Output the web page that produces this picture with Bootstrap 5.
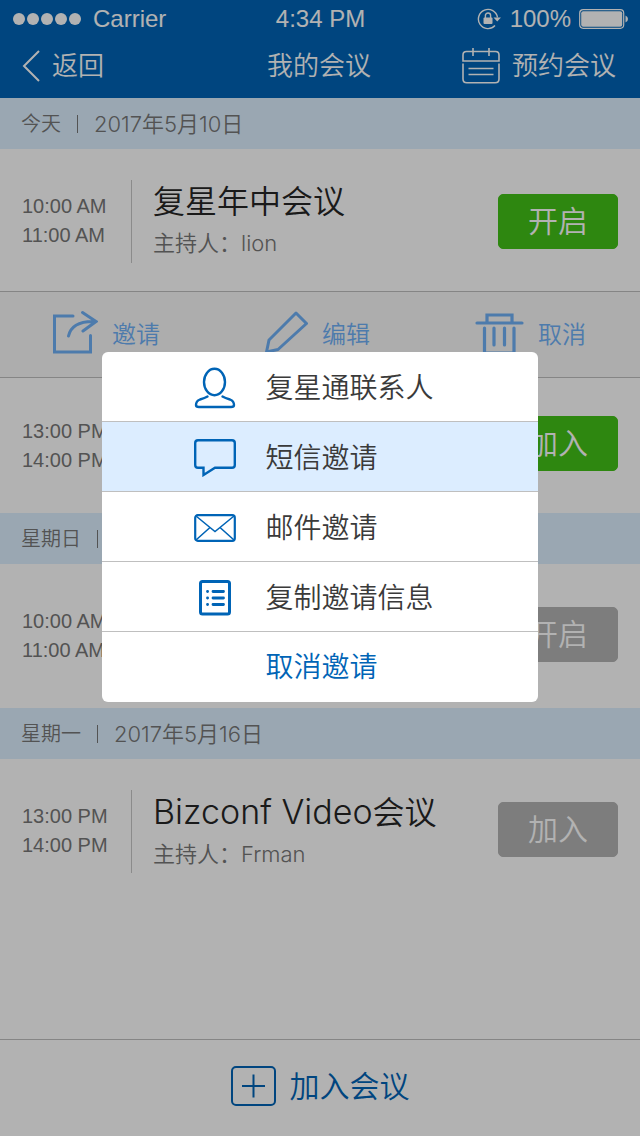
<!DOCTYPE html>
<html lang="zh-CN">
<head>
<meta charset="utf-8">
<meta name="viewport" content="width=device-width, initial-scale=1">
<title>我的会议</title>
<link rel="stylesheet" href="https://cdn.jsdelivr.net/npm/bootstrap@5.3.0/dist/css/bootstrap.min.css">
<script src="https://cdn.jsdelivr.net/npm/bootstrap@5.3.0/dist/js/bootstrap.bundle.min.js"></script>
<style>
  :root { --brand: #0064b6; --grey: #777; --thin: 350; }
  body { font-family: Inter, "Noto Sans CJK SC", sans-serif; font-weight: var(--thin); color: #262626; background: #fff; }
  button { font-weight: inherit; }
  svg { display: block; flex: none; fill: none; stroke: currentColor; }
  .top { background: var(--brand); color: #fff; height: 98px; }
  .status { font: 400 24px/36px "Liberation Sans", sans-serif; padding: 0 12px 0 13px; height: 38px; }
  .side { flex: 1 1 0; }
  .bar { height: 56px; padding: 0 24px 0 22px; font-size: 26px; line-height: 38px; }
  .bar h1 { font-size: 26px; line-height: 38px; font-weight: var(--thin); margin: 0; }
  .bar button { gap: 12px; }
  .plain { border: 0; background: none; padding: 0; color: inherit; }
  .day { background: #ddf0ff; color: var(--grey); height: 51px; padding: 0 22px 0 21px; gap: 16px; font-size: 20px; line-height: 30px; }
  .day time { font-size: 22px; }
  .rule { width: 1px; height: 18px; background: currentColor; }
  .meeting { min-height: 144px; padding: 0 22px; }
  .meeting.first { min-height: 143px; padding-top: 2px; }
  .meeting.short { min-height: 135px; }
  .line-b { border-bottom: 1px solid #bfbfbf; }
  .times { width: 109px; font-family: "Liberation Sans", sans-serif; font-size: 20px; line-height: 29px; color: var(--grey); }
  .info { border-left: 1px solid #c8c8c8; height: 83px; padding-left: 21px; }
  .info h2 { font-size: 32px; line-height: 44px; font-weight: var(--thin); margin: 0; }
  .info h2 span { font-size: 34px; }
  .info p { font-size: 22px; line-height: 38px; color: var(--grey); margin: 0; }
  .go { width: 120px; height: 55px; border-radius: 5px; font-size: 30px; font-weight: var(--thin); padding: 0; margin-bottom: 4px; --bs-btn-color: #fff; --bs-btn-bg: #42c217; --bs-btn-border-color: #42c217; }
  .go:disabled { opacity: 1; color: #fff; background: #b3b3b3; border-color: #b3b3b3; }
  .first .go { margin-bottom: 0; }
  .tools { background: #f8f8f8; height: 86px; padding: 0 54px 0 52px; color: #6fb0f6; font-size: 24px; }
  .tools button { gap: 14px; }
  .tools svg { margin-bottom: 5px; }
  .join { border-top: 1px solid #bfbfbf; height: 97px; padding-bottom: 4px; font-size: 30px; color: var(--brand); }
  .join button { gap: 14px; }
  .veil { position: fixed; inset: 0; background: rgba(0, 0, 0, .3); padding-top: 352px; }
  .sheet { width: 68%; border-radius: 6px; overflow: hidden; background: #fff; }
  .sheet button { display: grid; grid-template-columns: 40px 1fr; column-gap: 30px; align-items: center; justify-items: center; width: 100%; height: 70px; padding: 3px 0 0 93px; font-size: 28px; color: #3a3a3a; }
  .sheet button span { justify-self: start; grid-column: 2; }
  .sheet svg { color: var(--brand); }
  .sheet .chosen { background: #dcedff; }
  .sheet .cancel { color: var(--brand); padding-top: 0; }
</style>
</head>
<body class="d-flex flex-column min-vh-100">
<header class="top">
  <div class="status d-flex align-items-center">
    <div class="side d-flex align-items-center" style="gap:11px">
      <svg width="69" height="14"><g fill="#fff" stroke="none"><circle cx="6" cy="7" r="6"/><circle cx="20" cy="7" r="6"/><circle cx="34" cy="7" r="6"/><circle cx="48" cy="7" r="6"/><circle cx="62" cy="7" r="6"/></g></svg>
      <span>Carrier</span>
    </div>
    <span>4:34 PM</span>
    <div class="side d-flex align-items-center justify-content-end gap-2">
      <svg width="25" height="22" viewBox="0 0 25 22"><path d="M20.500 9.500A9.600 9.600 0 1 0 18 17.600" stroke-width="1.400"/><path d="M16.500 9.500h7.500l-3.800 4z" fill="currentColor" stroke="none"/><rect x="6.500" y="9.500" width="9" height="6.500" rx="1" fill="currentColor" stroke="none"/><path d="M8.400 10V7.600a2.600 2.600 0 0 1 5.200 0V10" stroke-width="1.400"/></svg>
      <span>100%</span>
      <svg width="49" height="20" viewBox="0 0 49 20"><rect x=".7" y=".7" width="44" height="18.600" rx="3.500" stroke-width="1.200"/><rect x="2.200" y="2.200" width="41" height="15.600" rx="2" fill="currentColor" stroke="none"/><path d="M46.500 6.500q2.500 1 2.500 3.500t-2.500 3.500z" fill="currentColor" stroke="none"/></svg>
    </div>
  </div>
  <nav class="bar d-flex align-items-center">
    <div class="side"><button class="plain d-flex align-items-center">
      <svg width="18" height="32" viewBox="0 0 18 32" stroke-width="2"><path d="M17 1 2 16l15 15"/></svg>返回</button></div>
    <h1>我的会议</h1>
    <div class="side d-flex justify-content-end"><button class="plain d-flex align-items-center text-nowrap">
      <svg width="38" height="36" viewBox="0 0 38 36" stroke-width="1.600"><path d="M1 13V7q0-3.500 3.500-3.500h29Q37 3.500 37 7v6z"/><path d="M11 0v8M27 0v8M1 15.500V31q0 3.800 3.800 3.800h28.400Q37 34.800 37 31V15.500M6.500 20.500h25M6.500 26.500h25"/></svg>预约会议</button></div>
  </nav>
</header>

<main class="flex-grow-1">
  <div class="day d-flex align-items-center"><span>今天</span><i class="rule"></i><time datetime="2017-05-10">2017年5月10日</time></div>
  <article class="meeting first d-flex align-items-center line-b">
    <div class="times">10:00 AM<br>11:00 AM</div>
    <div class="info flex-grow-1"><h2>复星年中会议</h2><p>主持人：lion</p></div>
    <button class="btn go">开启</button>
  </article>
  <div class="tools d-flex align-items-center justify-content-between line-b">
    <button class="plain d-flex align-items-center">
      <svg width="46" height="44" viewBox="0 0 46 44" stroke-width="3" stroke-linecap="round"><path d="M21 6H2.500v36h36V25.500"/><path d="M16.500 26C19 15 29 11 43 11.500M30.500 2.500 44 11.500 31 21"/></svg>邀请</button>
    <button class="plain d-flex align-items-center">
      <svg width="43" height="44" viewBox="0 0 43 44" stroke-width="3" stroke-linejoin="round"><path d="M31 3 41.500 13.500 13 39.500 1.500 42 4 30z"/></svg>编辑</button>
    <button class="plain d-flex align-items-center">
      <svg width="49" height="44" viewBox="0 0 49 44" stroke-width="3.200" stroke-linecap="round"><path d="M2 13h45M12 12V5h25v7M9.500 18v25h29.500V18M19 18v17M29.500 18v17"/></svg>取消</button>
  </div>
  <article class="meeting short d-flex align-items-center">
    <div class="times flex-grow-1">13:00 PM<br>14:00 PM</div>
    <button class="btn go">加入</button>
  </article>
  <div class="day d-flex align-items-center"><span>星期日</span><i class="rule"></i></div>
  <article class="meeting d-flex align-items-center">
    <div class="times flex-grow-1">10:00 AM<br>11:00 AM</div>
    <button class="btn go" disabled>开启</button>
  </article>
  <div class="day d-flex align-items-center"><span>星期一</span><i class="rule"></i><time datetime="2017-05-16">2017年5月16日</time></div>
  <article class="meeting d-flex align-items-center">
    <div class="times">13:00 PM<br>14:00 PM</div>
    <div class="info flex-grow-1"><h2><span>Bizconf Video</span>会议</h2><p>主持人：Frman</p></div>
    <button class="btn go" disabled>加入</button>
  </article>
</main>

<footer class="join d-flex align-items-center justify-content-center">
  <button class="plain d-flex align-items-center">
    <svg width="45" height="40" viewBox="0 0 45 40" stroke-width="2"><rect x="1" y="1" width="43" height="38" rx="4"/><path d="M22.500 8.500v23M11 20h23"/></svg>加入会议</button>
</footer>

<div class="veil d-flex justify-content-center align-items-start">
  <div class="sheet" role="dialog" aria-label="邀请">
    <button class="plain line-b"><svg width="42" height="42" viewBox="0 0 42 42" stroke-width="2.400" stroke-linecap="round"><ellipse cx="20.500" cy="15" rx="10.500" ry="13.200"/><path d="M13.500 29.500Q11 31 6 32.500 2 34 2 38q0 2 3 2h32q3 0 3-2 0-4-4-5.500-5-1.500-7.500-3"/></svg><span>复星通联系人</span></button>
    <button class="plain line-b chosen"><svg width="42" height="38" viewBox="0 0 42 38" stroke-width="2.400"><path d="M4 1.200h34q2.800 0 2.800 2.800v22q0 2.800-2.800 2.800H21L9.500 36v-7.200H4q-2.800 0-2.800-2.800V4Q1.200 1.200 4 1.200z"/></svg><span>短信邀请</span></button>
    <button class="plain line-b"><svg width="42" height="28" viewBox="0 0 42 28" stroke-width="2.200"><rect x="1.200" y="1.200" width="39.600" height="25.600" rx="2.500"/><path d="m2 2 14 11.500 5 4 5-4L40 2M2 26l14-12.500M40 26 26 13.500" stroke-width="1.600"/></svg><span>邮件邀请</span></button>
    <button class="plain line-b"><svg width="32" height="36" viewBox="0 0 32 36" stroke-width="3"><rect x="1.500" y="1.500" width="29" height="32.500" rx="2"/><path d="M14 11.500h10.500M14 18h10.500M14 24.500h10.500M8.500 11.500h.1M8.500 18h.1M8.500 24.500h.1" stroke-width="2.800" stroke-linecap="round"/></svg><span>复制邀请信息</span></button>
    <button class="plain cancel"><span>取消邀请</span></button>
  </div>
</div>
</body>
</html>
